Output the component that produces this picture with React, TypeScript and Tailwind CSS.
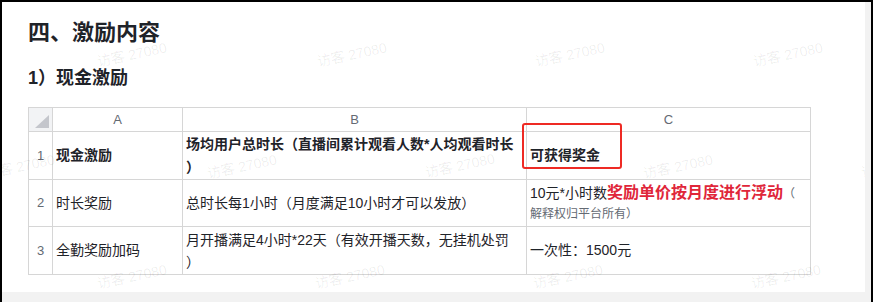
import React from "react";

const marks: string[] = [
  "left-[130px] top-[53px]",
  "left-[350px] top-[53px]",
  "left-[568px] top-[53px]",
  "left-[786px] top-[53px]",
  "left-[18px] top-[165px]",
  "left-[240px] top-[165px]",
  "left-[458px] top-[164px]",
  "left-[676px] top-[165px]",
  "left-[894px] top-[164px]",
  "left-[130px] top-[275px]",
  "left-[348px] top-[275px]",
  "left-[566px] top-[275px]",
  "left-[784px] top-[275px]",
];

const cell = "border-r border-b border-[#d6d6d6] flex items-center";
const txt = "pl-[3px] text-[14px] text-[#1f2329] whitespace-nowrap";
const hdr = "border-r border-b border-[#d6d6d6] flex items-center justify-center text-[13px] text-[#646a73]";

export default function App() {
  return (
    <div className="w-[873px] h-[302px] border-t-2 border-l-2 border-r-2 border-black bg-[#f2f2f2] font-['Liberation_Sans','Noto_Sans_CJK_SC',sans-serif]">
      <div className="relative w-[863px] h-[290px] bg-white overflow-hidden pl-[26px] pt-[16px]">
        <h1 className="text-[22px] leading-[30px] font-bold text-[#1f2329]">四、激励内容</h1>
        <h2 className="mt-[17px] text-[18px] leading-[26px] font-bold text-[#1f2329]">1）现金激励</h2>

        <div className="relative mt-[16px] w-fit">
          <div className="grid grid-cols-[24px_130px_344px_284px] grid-rows-[24px_48px_47px_48px] border-t border-l border-[#d6d6d6]">
            {/* header row */}
            <div className={`${cell} relative bg-[#f2f3f5]`}>
              <div className="absolute right-[3px] bottom-[3px] w-0 h-0 border-l-[14px] border-l-transparent border-b-[13px] border-b-[#c4c6cc]" />
            </div>
            <div className={hdr}>A</div>
            <div className={hdr}>B</div>
            <div className={hdr}>C</div>

            {/* row 1 */}
            <div className={hdr}>1</div>
            <div className={cell}>
              <span className={`${txt} font-bold`}>现金激励</span>
            </div>
            <div className={cell}>
              <span className={`${txt} font-bold leading-[23px]`}>
                场均用户总时长（直播间累计观看人数*人均观看时长
                <br />）
              </span>
            </div>
            <div className={cell}>
              <span className={`${txt} font-bold`}>可获得奖金</span>
            </div>

            {/* row 2 */}
            <div className={hdr}>2</div>
            <div className={cell}>
              <span className={txt}>时长奖励</span>
            </div>
            <div className={cell}>
              <span className={txt}>总时长每1小时（月度满足10小时才可以发放）</span>
            </div>
            <div className={cell}>
              <div className="pl-[3px] whitespace-nowrap">
                <div className="leading-[20px]">
                  <span className="text-[14px] text-[#1f2329]">10元*小时数</span>
                  <span className="text-[16px] font-bold text-[#e0263a]">奖励单价按月度进行浮动</span>
                  <span className="text-[12px] text-[#646a73]">（</span>
                </div>
                <div className="leading-[20px] text-[12px] text-[#646a73]">解释权归平台所有）</div>
              </div>
            </div>

            {/* row 3 */}
            <div className={hdr}>3</div>
            <div className={cell}>
              <span className={txt}>全勤奖励加码</span>
            </div>
            <div className={cell}>
              <span className={`${txt} leading-[22px]`}>
                月开播满足4小时*22天（有效开播天数，无挂机处罚
                <br />）
              </span>
            </div>
            <div className={cell}>
              <span className={txt}>一次性：1500元</span>
            </div>
          </div>

          {/* red annotation box */}
          <div className="absolute left-[494px] top-[16px] w-[100px] h-[46px] border-2 border-[#ee2a24] rounded-[3px] pointer-events-none" />
        </div>

        {marks.map((m, i) => (
          <span
            key={i}
            className={`absolute ${m} -translate-x-1/2 -translate-y-1/2 -rotate-12 whitespace-nowrap text-[14px] text-[rgba(0,0,0,0.07)] pointer-events-none select-none`}
          >
            访客 27080
          </span>
        ))}
      </div>
    </div>
  );
}
